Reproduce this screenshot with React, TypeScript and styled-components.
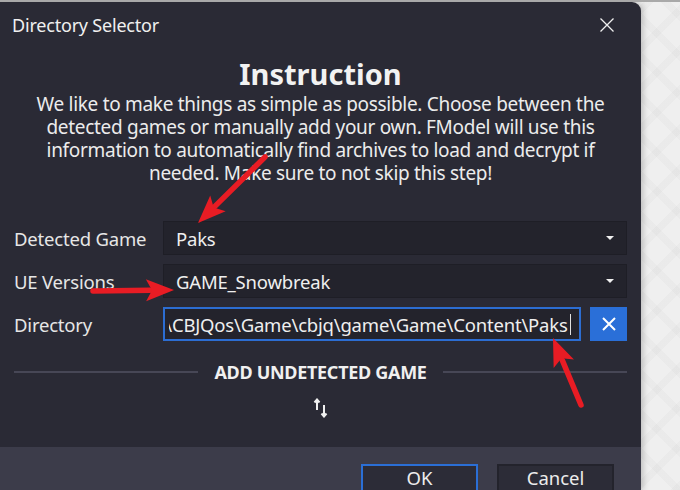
import React, { useLayoutEffect, useRef } from "react";
import styled, { createGlobalStyle } from "styled-components";

const GlobalStyle = createGlobalStyle`
  html, body { margin: 0; padding: 0; }
  body { font-family: "Noto Sans", "Open Sans", sans-serif; background: #efefef; }
  * { box-sizing: border-box; }
`;

const Page = styled.div`
  position: relative;
  width: 680px;
  height: 490px;
  overflow: hidden;
  display: flex;
  align-items: flex-start;
  background-color: #efefef;
  background-image:
    repeating-linear-gradient(45deg, rgba(0,0,0,0.018) 0 7px, transparent 7px 28px),
    repeating-linear-gradient(-45deg, rgba(0,0,0,0.018) 0 7px, transparent 7px 28px);
  border-top: 2px solid #a9a9a9;
`;

const Dialog = styled.div`
  width: 641px;
  height: 488px;
  background: #2a2a35;
  border-radius: 0 9px 0 0;
  box-shadow: 2px 0 6px rgba(0, 0, 0, 0.22);
  display: flex;
  flex-direction: column;
  color: #ececec;
  overflow: hidden;
`;

const TitleBar = styled.div`
  height: 46px;
  padding: 0 26px 0 12px;
  display: flex;
  align-items: center;
  justify-content: space-between;
`;

const Title = styled.div`
  font-size: 18px;
  color: #f0f0f0;
  letter-spacing: -0.2px;
`;

const CloseIcon = styled.svg`
  width: 16px;
  height: 16px;
  display: block;
`;

const Body = styled.div`
  display: flex;
  flex-direction: column;
  padding: 0 14px 0 14px;
`;

const Heading = styled.h1`
  margin: 9px 0 0;
  text-align: center;
  font-size: 29px;
  font-weight: 700;
  line-height: 33px;
  color: #f2f2f2;
`;

const Paragraph = styled.p`
  margin: 3px 0 0;
  text-align: center;
  font-size: 19px;
  line-height: 23px;
  color: #ececec;
  letter-spacing: -0.3px;
  padding: 0 2px;
`;

const Form = styled.div`
  margin-top: 36px;
  display: flex;
  flex-direction: column;
  gap: 9px;
`;

const Row = styled.div`
  display: grid;
  grid-template-columns: 149px minmax(0, 1fr);
  align-items: center;
  height: 34px;
`;

const Label = styled.div`
  font-size: 18.5px;
  color: #e6e6e6;
  letter-spacing: -0.2px;
`;

const Combo = styled.div`
  height: 34px;
  background: #23232c;
  border: 1px solid #1e1e26;
  display: flex;
  align-items: center;
  justify-content: space-between;
  padding: 0 12px 0 12px;
  font-size: 18.5px;
  color: #efefef;
  letter-spacing: -0.2px;
`;

const Caret = styled.span`
  width: 0;
  height: 0;
  border-left: 4px solid transparent;
  border-right: 4px solid transparent;
  border-top: 4px solid #f0f0f0;
`;

const PathRow = styled.div`
  display: flex;
  gap: 9px;
  height: 34px;
  min-width: 0;
`;

const PathField = styled.div`
  position: relative;
  flex: 1;
  min-width: 0;
  height: 34px;
`;

const PathInput = styled.input`
  width: 100%;
  height: 34px;
  border: 2px solid #2c6dd2;
  background: #23232c;
  outline: none;
  padding: 0 11px 0 4px;
  font-family: "Noto Sans", "Open Sans", sans-serif;
  font-size: 18.5px;
  color: #efefef;
  letter-spacing: -0.2px;
  caret-color: transparent;
`;

const TextCaret = styled.span`
  position: absolute;
  right: 10px;
  top: 7px;
  width: 1px;
  height: 21px;
  background: #e0e0e0;
`;

const ClearButton = styled.button`
  flex-shrink: 0;
  width: 37px;
  height: 34px;
  border: none;
  background: #2a6fd8;
  display: flex;
  align-items: center;
  justify-content: center;
  padding: 0;
`;

const Divider = styled.div`
  margin-top: 19px;
  display: flex;
  align-items: center;
  gap: 16px;
  &::before, &::after {
    content: "";
    flex: 1;
    height: 2px;
    background: #474756;
  }
`;

const DividerText = styled.span`
  font-size: 18px;
  font-weight: 700;
  color: #f0f0f0;
  letter-spacing: -0.3px;
`;

const SwapIcon = styled.svg`
  display: block;
  margin: 14px auto 0;
  width: 16px;
  height: 20px;
`;

const Footer = styled.div`
  margin-top: auto;
  height: 43px;
  background: #3c3c4a;
  display: flex;
  justify-content: flex-end;
  align-items: flex-start;
  gap: 19px;
  padding: 17px 27px 0 0;
`;

const FooterButton = styled.button<{ $primary?: boolean }>`
  width: 117px;
  height: 34px;
  background: #2c2c37;
  border: 2px solid ${(p) => (p.$primary ? "#2b6fd6" : "#23232c")};
  color: #ececec;
  font-family: "Noto Sans", "Open Sans", sans-serif;
  font-size: 18.5px;
  line-height: 22px;
  display: flex;
  justify-content: center;
  align-items: flex-start;
  padding: 1px 0 0;
`;

const Overlay = styled.svg`
  position: absolute;
  left: 0;
  top: -2px;
  width: 680px;
  height: 490px;
  pointer-events: none;
`;

type ArrowProps = { x1: number; y1: number; x2: number; y2: number };

function Arrow({ x1, y1, x2, y2 }: ArrowProps) {
  const dx = x2 - x1;
  const dy = y2 - y1;
  const len = Math.hypot(dx, dy);
  const ux = dx / len;
  const uy = dy / len;
  const hl = 28;
  const hw = 11;
  const bx = x2 - hl * ux;
  const by = y2 - hl * uy;
  const nx = -uy;
  const ny = ux;
  const lx = x2 - (hl - 4) * ux;
  const ly = y2 - (hl - 4) * uy;
  return (
    <g>
      <line x1={x1} y1={y1} x2={lx} y2={ly} stroke="#e81c24" strokeWidth={5.5} strokeLinecap="round" />
      <polygon
        points={`${x2},${y2} ${bx + hw * nx},${by + hw * ny} ${bx + 6 * ux},${by + 6 * uy} ${bx - hw * nx},${by - hw * ny}`}
        fill="#e81c24"
      />
    </g>
  );
}

const PATH = "D:\\Snowbreak\\CBJQos\\Game\\cbjq\\game\\Game\\Content\\Paks";

function DirectoryInput() {
  const ref = useRef<HTMLInputElement>(null);
  useLayoutEffect(() => {
    const el = ref.current;
    if (el) el.scrollLeft = el.scrollWidth;
  }, []);
  return (
    <PathField>
      <PathInput ref={ref} defaultValue={PATH} spellCheck={false} />
      <TextCaret />
    </PathField>
  );
}

export default function App() {
  return (
    <>
      <GlobalStyle />
      <Page>
        <Dialog>
          <TitleBar>
            <Title>Directory Selector</Title>
            <CloseIcon viewBox="0 0 16 16">
              <path d="M1.5 1.5 L14.5 14.5 M14.5 1.5 L1.5 14.5" stroke="#f0f0f0" strokeWidth="1.3" />
            </CloseIcon>
          </TitleBar>
          <Body>
            <Heading>Instruction</Heading>
            <Paragraph>
              We like to make things as simple as possible. Choose between the detected games or manually add your
              own. FModel will use this information to automatically find archives to load and decrypt if needed. Make
              sure to not skip this step!
            </Paragraph>
            <Form>
              <Row>
                <Label>Detected Game</Label>
                <Combo>
                  <span>Paks</span>
                  <Caret />
                </Combo>
              </Row>
              <Row>
                <Label>UE Versions</Label>
                <Combo>
                  <span>GAME_Snowbreak</span>
                  <Caret />
                </Combo>
              </Row>
              <Row>
                <Label>Directory</Label>
                <PathRow>
                  <DirectoryInput />
                  <ClearButton aria-label="Clear">
                    <svg width="16" height="16" viewBox="0 0 16 16">
                      <path d="M2 2 L14 14 M14 2 L2 14" stroke="#ffffff" strokeWidth="2" />
                    </svg>
                  </ClearButton>
                </PathRow>
              </Row>
            </Form>
            <Divider>
              <DividerText>ADD UNDETECTED GAME</DividerText>
            </Divider>
            <SwapIcon viewBox="0 0 16 20">
              <path d="M4 12 V2 M1.5 4.5 L4 1.5 L6.5 4.5" stroke="#f0f0f0" strokeWidth="2" fill="none" />
              <path d="M11 7 V18 M8.5 15.5 L11 18.5 L13.5 15.5" stroke="#f0f0f0" strokeWidth="2" fill="none" />
            </SwapIcon>
          </Body>
          <Footer>
            <FooterButton $primary>OK</FooterButton>
            <FooterButton>Cancel</FooterButton>
          </Footer>
        </Dialog>
        <Overlay viewBox="0 0 680 490">
          <Arrow x1={265} y1={157} x2={198} y2={223} />
          <Arrow x1={93} y1={291} x2={174} y2={290} />
          <Arrow x1={581} y1={405} x2={553} y2={338} />
        </Overlay>
      </Page>
    </>
  );
}
